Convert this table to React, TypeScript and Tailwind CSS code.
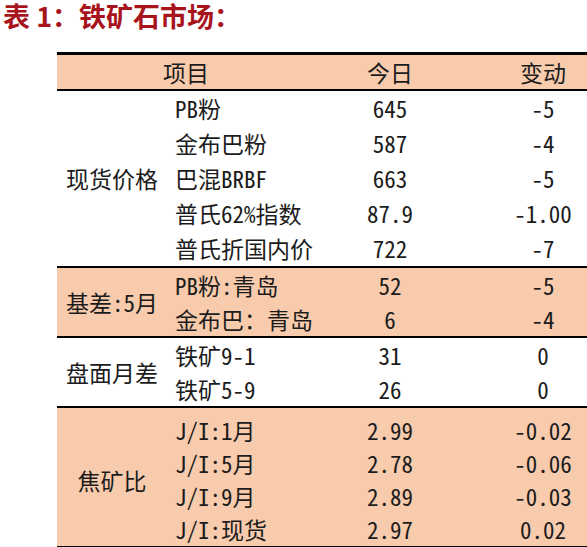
import React from 'react';

type Row = { name: string; today: string; change: string };
type Group = { label: string; rows: Row[]; shaded?: boolean; rowClass: string; padClass?: string };

const groups: Group[] = [
  {
    label: '现货价格',
    rowClass: 'h-[35px]',
    rows: [
      { name: 'PB粉', today: '645', change: '-5' },
      { name: '金布巴粉', today: '587', change: '-4' },
      { name: '巴混BRBF', today: '663', change: '-5' },
      { name: '普氏62%指数', today: '87.9', change: '-1.00' },
      { name: '普氏折国内价', today: '722', change: '-7' },
    ],
  },
  {
    label: '基差:5月',
    shaded: true,
    rowClass: 'h-[34px]',
    rows: [
      { name: 'PB粉:青岛', today: '52', change: '-5' },
      { name: '金布巴：青岛', today: '6', change: '-4' },
    ],
  },
  {
    label: '盘面月差',
    rowClass: 'h-[34px]',
    rows: [
      { name: '铁矿9-1', today: '31', change: '0' },
      { name: '铁矿5-9', today: '26', change: '0' },
    ],
  },
  {
    label: '焦矿比',
    shaded: true,
    rowClass: 'h-[33px]',
    padClass: 'pt-[6px]',
    rows: [
      { name: 'J/I:1月', today: '2.99', change: '-0.02' },
      { name: 'J/I:5月', today: '2.78', change: '-0.06' },
      { name: 'J/I:9月', today: '2.89', change: '-0.03' },
      { name: 'J/I:现货', today: '2.97', change: '0.02' },
    ],
  },
];

const tableFont = {
  fontFamily: "'Noto Sans Mono CJK SC', 'Noto Sans CJK SC', 'DejaVu Sans Mono', monospace",
};

function GroupBlock({ group }: { group: Group }) {
  return (
    <div
      className={`flex border-b-2 border-black ${group.shaded ? 'bg-[#F8CBAD]' : 'bg-white'} ${
        group.padClass ?? ''
      }`}
    >
      <div className="flex w-[110px] shrink-0 items-center justify-center whitespace-nowrap">
        {group.label}
      </div>
      <div className="flex flex-1 flex-col">
        {group.rows.map((row) => (
          <div key={row.name} className={`flex items-center whitespace-nowrap ${group.rowClass}`}>
            <div className="w-[114px] shrink-0 pl-[8px]">{row.name}</div>
            <div className="w-[218px] shrink-0 text-center">{row.today}</div>
            <div className="flex-1 text-center">{row.change}</div>
          </div>
        ))}
      </div>
    </div>
  );
}

export default function App() {
  return (
    <div className="h-[547px] w-[587px] overflow-hidden bg-white">
      <div
        className="h-[34px] pl-[3px] text-[27px] font-bold leading-[32px] text-[#A8141C]"
        style={{ fontFamily: "'Noto Sans CJK SC', sans-serif" }}
      >
        表 1：铁矿石市场：
      </div>
      <div
        className="ml-[57px] mt-[18px] border-t-[3px] border-black text-[23px] leading-none text-[#1c1c1c]"
        style={tableFont}
      >
        <div className="flex h-[36px] items-center border-b-2 border-black bg-[#F8CBAD]">
          <div className="w-[224px] shrink-0 pl-[34px] text-center">项目</div>
          <div className="w-[218px] shrink-0 text-center">今日</div>
          <div className="flex-1 text-center">变动</div>
        </div>
        {groups.map((g) => (
          <GroupBlock key={g.label} group={g} />
        ))}
      </div>
    </div>
  );
}
